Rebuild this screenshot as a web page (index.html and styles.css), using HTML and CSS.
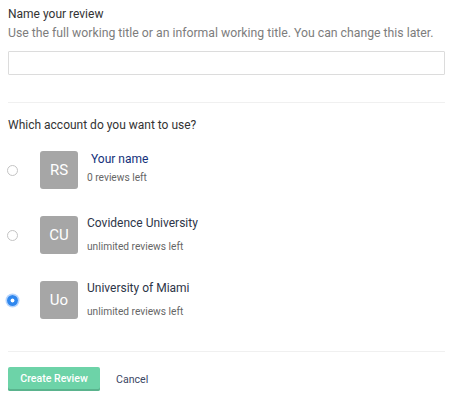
FILE: index.html
```html
<!DOCTYPE html>
<html>
<head>
<meta charset="utf-8">
<link rel="stylesheet" href="styles.css">
</head>
<body>
<div class="page">
  <section class="name-section">
    <label class="label">Name your review</label>
    <p class="hint">Use the full working title or an informal working title. You can change this later.</p>
    <input class="text-input" type="text">
  </section>
  <hr class="divider divider-top">
  <section class="account-section">
    <div class="label">Which account do you want to use?</div>
    <div class="accounts">
      <div class="account">
        <span class="radio"></span>
        <div class="avatar">RS</div>
        <div class="info info-own">
          <div class="acct-name acct-name-own">Your name</div>
          <div class="acct-sub">0 reviews left</div>
        </div>
      </div>
      <div class="account">
        <span class="radio"></span>
        <div class="avatar">CU</div>
        <div class="info">
          <div class="acct-name">Covidence University</div>
          <div class="acct-sub">unlimited reviews left</div>
        </div>
      </div>
      <div class="account">
        <span class="radio radio-checked"></span>
        <div class="avatar">Uo</div>
        <div class="info">
          <div class="acct-name">University of Miami</div>
          <div class="acct-sub">unlimited reviews left</div>
        </div>
      </div>
    </div>
  </section>
  <hr class="divider divider-bottom">
  <div class="actions">
    <button class="btn-primary">Create Review</button>
    <span class="btn-link">Cancel</span>
  </div>
</div>
</body>
</html>
```

FILE: styles.css
```css
* { box-sizing: border-box; }
html, body { margin: 0; padding: 0; background: #fff; }
body {
  font-family: Roboto, "Liberation Sans", Arial, sans-serif;
  color: #333;
}
.page {
  width: 456px;
  padding: 7px 11px 0 8px;
}
.label {
  display: block;
  font-size: 12px;
  line-height: 15px;
  color: #333;
}
.hint {
  margin: 4px 0 0;
  font-size: 12.25px;
  line-height: 15px;
  color: #7d7d7d;
  white-space: nowrap;
}
.text-input {
  display: block;
  margin-top: 10px;
  width: 437px;
  height: 24px;
  border: 1px solid #dcdcdc;
  border-radius: 1px;
  padding: 0 6px;
  outline: none;
}
.divider {
  border: 0;
  height: 1px;
  background: #f0f0f0;
  margin: 0;
  width: 437px;
}
.divider-top { margin-top: 27px; }
.account-section { padding-top: 15px; }
.accounts {
  display: flex;
  flex-direction: column;
  gap: 27px;
  margin-top: 18px;
}
.account {
  display: flex;
  align-items: center;
  height: 38px;
}
.radio {
  width: 11px;
  height: 11px;
  border-radius: 50%;
  border: 1px solid #c4c4c4;
  background: #fff;
  margin-left: -1px;
  flex: none;
}
.radio-checked {
  border: none;
  background: radial-gradient(circle, #fff 0 1.6px, #2f87ee 2.3px);
  box-shadow: 0 0 0 1.5px rgba(90,160,250,0.45);
}
.avatar {
  flex: none;
  width: 38px;
  height: 38px;
  margin-left: 22px;
  border-radius: 3px;
  background: #a6a6a6;
  color: #fff;
  font-size: 15px;
  display: flex;
  align-items: center;
  justify-content: center;
}
.info {
  margin-left: 9px;
  display: flex;
  flex-direction: column;
  gap: 9px;
  align-self: flex-start;
  margin-top: 0;
}
.info-own { gap: 4px; margin-top: 1px; }
.acct-name {
  font-size: 12px;
  line-height: 15px;
  color: #2d3548;
}
.acct-name-own {
  color: #13307a;
  padding-left: 4px;
}
.acct-sub {
  font-size: 10.2px;
  line-height: 13px;
  color: #666;
}
.divider-bottom { margin-top: 32px; }
.actions {
  display: flex;
  align-items: center;
  margin-top: 15px;
}
.btn-primary {
  width: 92px;
  height: 24px;
  border: none;
  border-radius: 2px;
  background: #6dd3a8;
  box-shadow: inset 0 -2px 0 #5ab38d;
  color: #fff;
  font-family: Roboto, "Liberation Sans", Arial, sans-serif;
  font-size: 10.6px;
  font-weight: 500;
  padding: 0 0 1px;
}
.btn-link {
  margin-left: 16px;
  font-size: 10.6px;
  color: #3b4663;
}
```
